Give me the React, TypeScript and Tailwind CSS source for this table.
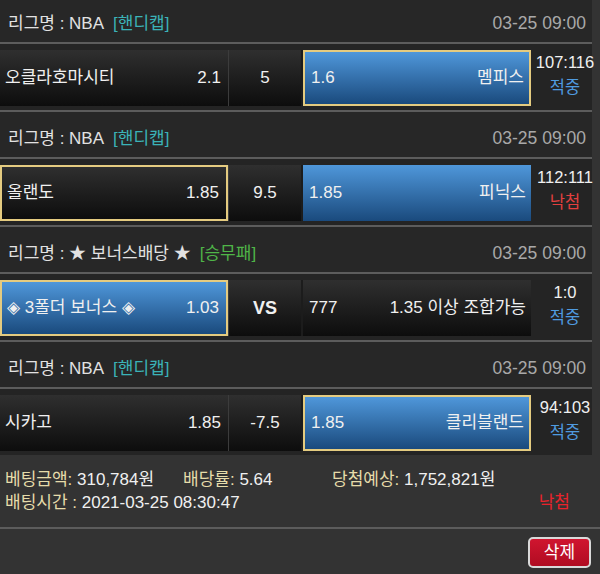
import React from "react";

type Side = { left: string; right: string; blue: boolean; sel: boolean };
type Block = {
  league: string;
  type: string;
  typeClass: string;
  home: Side;
  mid: string;
  midBold?: boolean;
  away: Side;
  score: string;
  result: string;
  resultClass: string;
};

const blocks: Block[] = [
  {
    league: "리그명 : NBA",
    type: "[핸디캡]",
    typeClass: "text-[#3bb3b8]",
    home: { left: "오클라호마시티", right: "2.1", blue: false, sel: false },
    mid: "5",
    away: { left: "1.6", right: "멤피스", blue: true, sel: true },
    score: "107:116",
    result: "적중",
    resultClass: "text-[#4f9be0]",
  },
  {
    league: "리그명 : NBA",
    type: "[핸디캡]",
    typeClass: "text-[#3bb3b8]",
    home: { left: "올랜도", right: "1.85", blue: false, sel: true },
    mid: "9.5",
    away: { left: "1.85", right: "피닉스", blue: true, sel: false },
    score: "112:111",
    result: "낙첨",
    resultClass: "text-[#e2403f]",
  },
  {
    league: "리그명 : ★ 보너스배당 ★",
    type: "[승무패]",
    typeClass: "text-[#4fb548]",
    home: { left: "◈ 3폴더 보너스 ◈", right: "1.03", blue: true, sel: true },
    mid: "VS",
    midBold: true,
    away: { left: "777", right: "1.35 이상 조합가능", blue: false, sel: false },
    score: "1:0",
    result: "적중",
    resultClass: "text-[#4f9be0]",
  },
  {
    league: "리그명 : NBA",
    type: "[핸디캡]",
    typeClass: "text-[#3bb3b8]",
    home: { left: "시카고", right: "1.85", blue: false, sel: false },
    mid: "-7.5",
    away: { left: "1.85", right: "클리블랜드", blue: true, sel: true },
    score: "94:103",
    result: "적중",
    resultClass: "text-[#4f9be0]",
  },
];

function Cell({ side, pad }: { side: Side; pad: string }) {
  const bg = side.blue
    ? "bg-[linear-gradient(to_bottom,#4f97da,#1a4a7d)]"
    : "bg-[linear-gradient(to_bottom,#2f2f2f,#0d0d0d)]";
  const border = side.sel ? "border-2 border-[#e4cb80]" : "";
  return (
    <div
      className={`w-[228px] h-[56px] flex items-center justify-between ${pad} ${bg} ${border} text-[17px] text-[#f0f0f0]`}
    >
      <span className="whitespace-nowrap">{side.left}</span>
      <span className="whitespace-nowrap">{side.right}</span>
    </div>
  );
}

function BlockView({ b, first }: { b: Block; first: boolean }) {
  return (
    <div className={`w-[592px] bg-[#272727] ${first ? "-mt-[5px]" : ""}`}>
      <div className="h-[2px] bg-[#5c5c5c]" />
      <div className="h-[45px] pt-[8px] pl-[8px] pr-[6px] flex items-center justify-between text-[17px]">
        <div className="flex items-center">
          <span className="text-[#e2e2e2] whitespace-nowrap">{b.league}</span>
          <span className={`ml-[9px] whitespace-nowrap ${b.typeClass}`}>{b.type}</span>
        </div>
        <span className="text-[#a9a9a9] text-[17.5px]">03-25 09:00</span>
      </div>
      <div className="h-[2px] bg-[#5c5c5c]" />
      <div className="h-[66px] flex items-start bg-[#242424]">
        <div className="flex items-center pt-[6px]">
          <Cell side={b.home} pad="pl-[5px] pr-[7px]" />
          <div className="w-[1px] h-[56px] bg-[#3c3c3c]" />
          <div className="w-[72px] h-[56px] flex items-center justify-center bg-[linear-gradient(to_bottom,#2f2f2f,#0d0d0d)] text-[17px] text-[#f0f0f0]">
            <span className={b.midBold ? "font-bold text-[18px]" : ""}>{b.mid}</span>
          </div>
          <div className="w-[2px] h-[56px] bg-[#1c1c1c]" />
          <Cell side={b.away} pad="pl-[6px] pr-[5px]" />
        </div>
        <div className="h-[66px] w-[68px] flex flex-col items-center justify-center pb-[5px] text-[16.5px] leading-[25px] shrink-0">
          <span className="text-[#f0f0f0] whitespace-nowrap">{b.score}</span>
          <span className={b.resultClass}>{b.result}</span>
        </div>
      </div>
    </div>
  );
}

export default function App() {
  return (
    <div className="w-[600px] h-[574px] overflow-hidden bg-[#333333] font-['Liberation_Sans','Noto_Sans_CJK_KR',sans-serif]">
      <div className="pt-[0.1px]">
        {blocks.map((b, i) => (
          <BlockView key={i} b={b} first={i === 0} />
        ))}
      </div>
      <div className="pt-[13px] pb-[13px] text-[17px] leading-[23px]">
        <div className="flex">
          <div className="w-[183px] pl-[5px] whitespace-nowrap">
            <span className="text-[#e6dcaa]">베팅금액: </span>
            <span className="text-[#f0f0f0]">310,784원</span>
          </div>
          <div className="w-[149px] whitespace-nowrap">
            <span className="text-[#e6dcaa]">배당률: </span>
            <span className="text-[#f0f0f0]">5.64</span>
          </div>
          <div className="whitespace-nowrap">
            <span className="text-[#e6dcaa]">당첨예상: </span>
            <span className="text-[#f0f0f0]">1,752,821원</span>
          </div>
        </div>
        <div className="flex justify-between pl-[5px] pr-[30px]">
          <div className="whitespace-nowrap">
            <span className="text-[#e6dcaa]">배팅시간 : </span>
            <span className="text-[#f0f0f0]">2021-03-25 08:30:47</span>
          </div>
          <span className="text-[#e8232b]">낙첨</span>
        </div>
      </div>
      <div className="h-[2px] bg-[#5c5c5c]" />
      <div className="flex justify-end pt-[8px] pr-[9px]">
        <button className="w-[63px] h-[31px] rounded-[5px] border-2 border-[#d9d9d9] bg-[linear-gradient(to_bottom,#d0152f,#b00c22)] text-white text-[17px] flex items-center justify-center">
          삭제
        </button>
      </div>
    </div>
  );
}
